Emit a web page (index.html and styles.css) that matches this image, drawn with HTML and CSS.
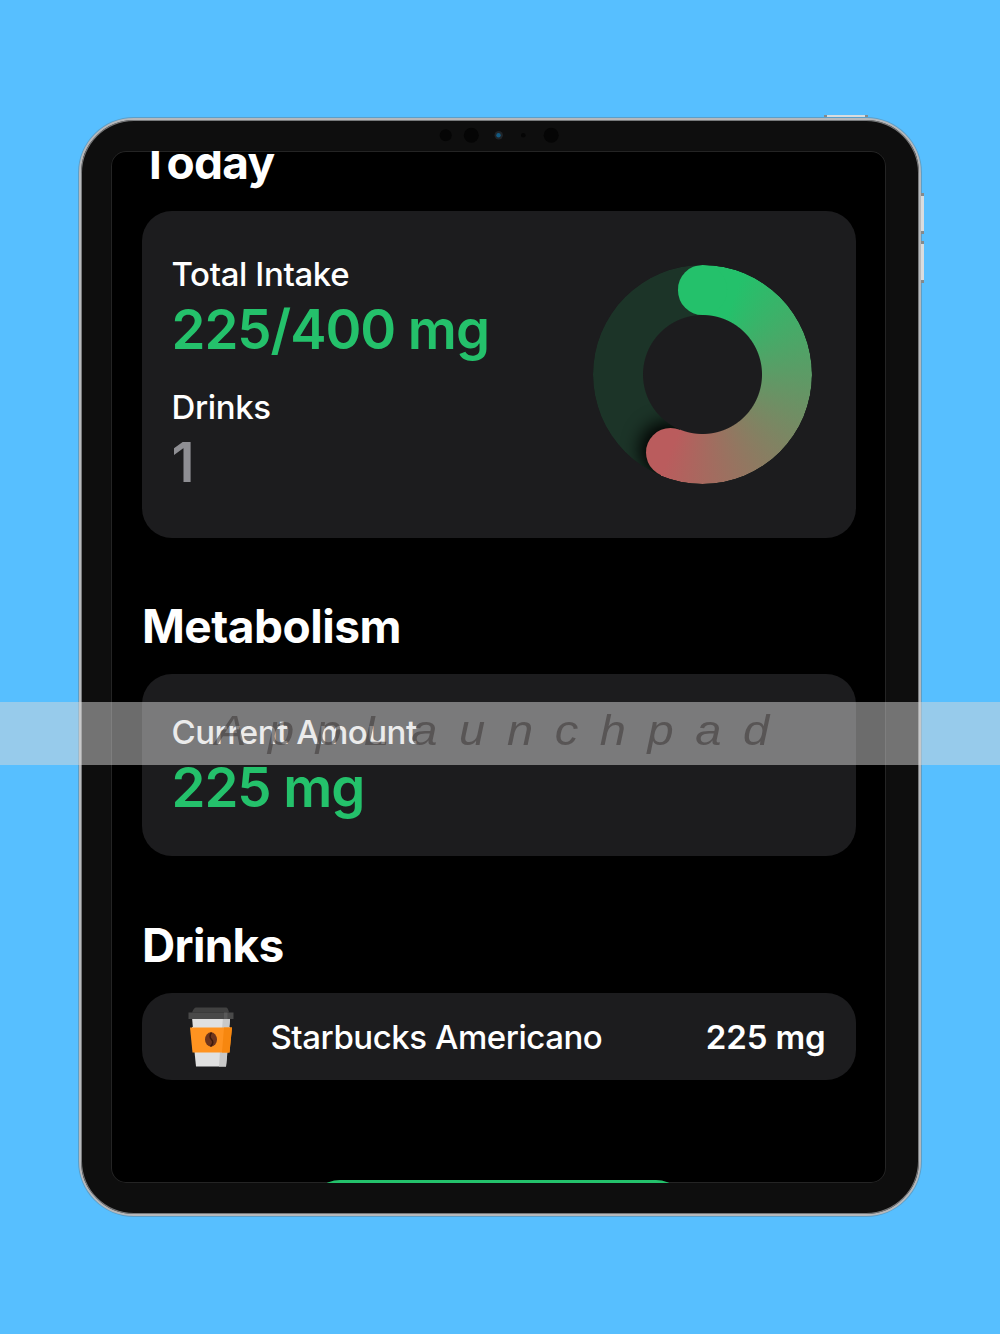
FILE: index.html
```html
<!DOCTYPE html>
<html lang="en">
<head>
<meta charset="utf-8">
<title>Caffeine Tracker</title>
<link rel="stylesheet" href="styles.css">
</head>
<body>
<main class="tablet">
  <i class="key power"></i><i class="key volume-up"></i><i class="key volume-down"></i>
  <svg class="sensors" width="130" height="20" viewBox="435 125 130 20">
    <g fill="#050505"><circle cx="445.7" cy="135.2" r="6"/><circle cx="471.3" cy="135.2" r="7.5"/><circle cx="523.3" cy="135.2" r="2.3"/><circle cx="551.2" cy="135.2" r="7.5"/></g>
    <circle cx="498.7" cy="135.2" r="4.2" fill="#202428"/><circle cx="498.5" cy="135.2" r="2.2" fill="#135b83"/>
  </svg>
  <div class="screen">
    <h1 class="heading today">Today</h1>
    <section class="card summary">
      <div class="stats">
        <p class="label total">Total Intake</p>
        <p class="value intake">225/400 mg</p>
        <p class="label drinks-label">Drinks</p>
        <p class="value count">1</p>
      </div>
      <div class="ring"><i class="end"></i><i class="arc"></i><i class="start"></i></div>
    </section>
    <h2 class="heading metabolism">Metabolism</h2>
    <section class="card current">
      <p class="label amount">Current Amount</p>
      <p class="value now">225 mg</p>
    </section>
    <h2 class="heading drinks">Drinks</h2>
    <section class="card drink">
      <svg class="cup" width="46" height="62" viewBox="0 0 46 62">
        <path d="M4 20h38l-4 39.5H8z" fill="#e0e0e0"/><path d="M34 10h8l-4 49.5h-7z" fill="#c8c8c8"/>
        <path d="M4 10h38l-1 12H5z" fill="#e0e0e0"/><path d="M35 10h7l-1 12h-7z" fill="#c8c8c8"/>
        <path d="M8 .5h30q2 0 3 5H4q2-5 4-5z" fill="#414141"/><rect x=".5" y="5.5" width="45" height="6.5" fill="#494949"/><path d="M36 5.5h3.5V12H36z" fill="#595959"/>
        <path d="M2 20.5h42l-2.5 25h-37z" fill="#ff9320"/><path d="M36 20.5h8l-2.5 25H34z" fill="#f7870f"/>
        <ellipse cx="23" cy="32.5" rx="6" ry="7.2" fill="#6d351d"/><path d="M23.5 25.5q-3 4 0 7t-1 7" fill="none" stroke="#3d180b" stroke-width="1.5"/>
      </svg>
      <span class="label name">Starbucks Americano</span>
      <span class="label dose">225 mg</span>
    </section>
    <div class="add"></div>
  </div>
</main>
<div class="watermark"><span>AppLaunchpad</span></div>
</body>
</html>
```
FILE: styles.css
```css
* { box-sizing: border-box; }
body { margin: 0; height: 1334px; overflow: hidden; position: relative; background: #57bfff; font-family: Inter, "Liberation Sans", sans-serif; color: #fff; padding: 118px 0 0 79px; }
h1, h2, p { margin: 0; }
.tablet { position: relative; width: 842px; height: 1098px; padding: 31px 30px 0; border: 2px solid #b6b8bb; border-radius: 55px; background: #0e0e0e; box-shadow: 0 0 0 1px #5b9fc9, inset 0 0 0 1px #77797b; }
.key { position: absolute; background: #d9dcdd; border: 0 solid #858a8c; }
.power { width: 44px; height: 2px; top: -5px; left: 743px; border-width: 0 3px; }
.volume-up, .volume-down { width: 3px; height: 41px; right: -5px; border-width: 3px 0; }
.volume-up { top: 73px; } .volume-down { top: 121px; height: 42px; }
.sensors { position: absolute; left: 354px; top: 5px; }
.screen { width: 775px; height: 1032px; overflow: hidden; background: #000; box-shadow: inset 0 0 0 1px #242424; border-radius: 15px; padding: 1px 31px 0; display: flex; flex-direction: column; }
.heading { font-size: 46px; font-weight: 700; line-height: 56px; white-space: nowrap; flex: none; }
.today { margin: -18px 0 21px -2px; letter-spacing: -.7px; }
.metabolism { margin: 60px 0 20px; letter-spacing: -.5px; }
.drinks { margin: 60.5px 0 20.5px; letter-spacing: -.7px; }
.card { width: 714px; flex: none; background: #1c1c1e; border-radius: 30px; }
.summary { height: 327px; padding: 42px 43px 0 29.5px; display: flex; justify-content: space-between; }
.label { font-size: 33px; line-height: 42px; font-weight: 500; white-space: nowrap; letter-spacing: -.38px; }
.value { font-size: 54.5px; line-height: 66px; font-weight: 600; color: #24c16b; white-space: nowrap; letter-spacing: -1.05px; }
.intake { margin-top: 1px; }
.drinks-label { margin-top: 24px; }
.count { color: #8e8e93; margin-top: 1px; }
.ring { position: relative; width: 219px; height: 219px; margin: 12px 1px 0 0; background: #1c3428; border-radius: 50%; -webkit-mask: radial-gradient(circle, transparent 59px, #000 60px); mask: radial-gradient(circle, transparent 59px, #000 60px); overflow: hidden; }
.ring i { position: absolute; border-radius: 50%; }
.ring .arc { inset: 0; background: conic-gradient(#24c16b 0 22deg, #ba5c5d 202.5deg, transparent 202.5deg); }
.start, .end { width: 49.6px; height: 49.6px; }
.start { left: 84.7px; top: 0; background: #24c16b; }
.end { left: 52.8px; top: 162.6px; background: #ba5c5d; box-shadow: -3px -3px 18px 3px #000; }
.current { height: 182px; padding: 37px 29.5px 0; }
.amount { letter-spacing: -.5px; }
.now { margin-top: 1px; }
.drink { height: 87px; padding: 2px 30.5px 0 46px; display: flex; align-items: center; }
.cup { flex: none; }
.name { margin: -2px 0 0 36.5px; letter-spacing: -.46px; }
.dose { margin: -2px 0 0 auto; font-weight: 600; letter-spacing: -.15px; }
.add { flex: none; width: 376px; height: 60px; margin: 100px 0 0 168px; border-radius: 30px; background: #24c16b; }
.watermark { position: absolute; left: 0; top: 702px; width: 1000px; height: 63px; background: rgba(216,216,216,.5); overflow: hidden; padding-left: 214.5px; font: italic 42px/58px "Liberation Sans", sans-serif; letter-spacing: 19.3px; color: rgba(65,60,60,.6); white-space: nowrap; }
.watermark span { display: inline-block; transform: scaleX(1.12); transform-origin: left; }
```
